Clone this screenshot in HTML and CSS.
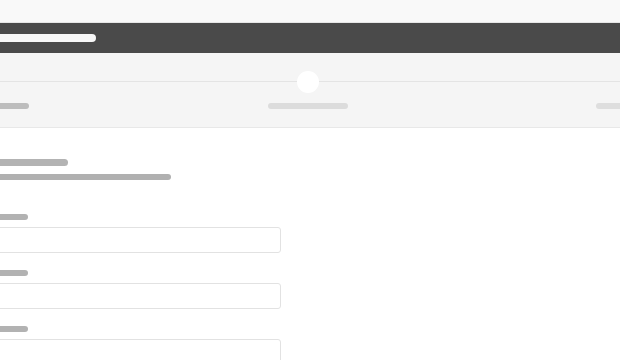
FILE: index.html
```html
<!DOCTYPE html>
<html>
<head>
<meta charset="utf-8">
<link rel="stylesheet" href="styles.css">
</head>
<body>
<div class="topstrip"></div>
<header class="appbar"><span class="bar-title"></span></header>
<div class="subbar"></div>
<nav class="stepper">
  <div class="step step-left"><span class="step-label done"></span></div>
  <div class="step step-center"><span class="step-dot"></span><span class="step-label"></span></div>
  <div class="step step-right"><span class="step-label"></span></div>
</nav>
<main class="content">
  <div class="heading">
    <span class="pill title"></span>
    <span class="pill subtitle"></span>
  </div>
  <div class="field"><span class="pill label"></span><div class="input"></div></div>
  <div class="field"><span class="pill label"></span><div class="input"></div></div>
  <div class="field"><span class="pill label"></span><div class="input"></div></div>
</main>
</body>
</html>
```

FILE: styles.css
```css
html, body {
  margin: 0;
  padding: 0;
  background: #ffffff;
  font-family: "Liberation Sans", Arial, sans-serif;
  overflow: hidden;
}
.topstrip {
  height: 22px;
  background: #f9f9f9;
  border-bottom: 1px solid #e6e6e6;
}
.appbar {
  height: 30px;
  background: #4a4a4a;
  display: flex;
  align-items: center;
}
.bar-title {
  display: block;
  width: 116px;
  height: 8px;
  margin-left: -20px;
  background: #f7f7f7;
  border-radius: 4px;
}
.subbar {
  height: 28px;
  background: #f5f5f5;
  border-bottom: 1px solid #e4e4e4;
}
.stepper {
  height: 45px;
  background: #f5f5f5;
  border-bottom: 1px solid #e8e8e8;
  display: grid;
  grid-template-columns: 267px 81px 1fr;
  align-items: start;
}
.step {
  display: flex;
  flex-direction: column;
  align-items: center;
}
.step-left { align-items: flex-start; padding-top: 21px; }
.step-right { align-items: flex-end; padding-top: 21px; }
.step-dot {
  width: 22px;
  height: 22px;
  border-radius: 50%;
  background: #ffffff;
  margin-top: -11px;
  margin-bottom: 10px;
}
.step-label {
  display: block;
  width: 80px;
  height: 6px;
  border-radius: 3px;
  background: #dcdcdc;
}
.step-left .step-label {
  width: 50px;
  margin-left: -21px;
  background: #bdbdbd;
}
.step-right .step-label {
  width: 50px;
  margin-right: -26px;
  background: #dedede;
}
.content {
  padding-top: 31px;
}
.heading {
  display: flex;
  flex-direction: column;
  gap: 8px;
  margin-bottom: 34px;
}
.pill {
  display: block;
  border-radius: 4px;
  background: #b3b3b3;
  margin-left: -12px;
}
.title { width: 80px; height: 7px; }
.subtitle { width: 183px; height: 6px; background: #b0b0b0; }
.field {
  display: flex;
  flex-direction: column;
  margin-bottom: 17px;
}
.label {
  width: 40px;
  height: 6px;
  background: #b2b2b2;
  margin-bottom: 7px;
}
.input {
  width: 289px;
  height: 24px;
  margin-left: -10px;
  border: 1px solid #e2e2e2;
  border-radius: 3px;
  background: #ffffff;
}
```
